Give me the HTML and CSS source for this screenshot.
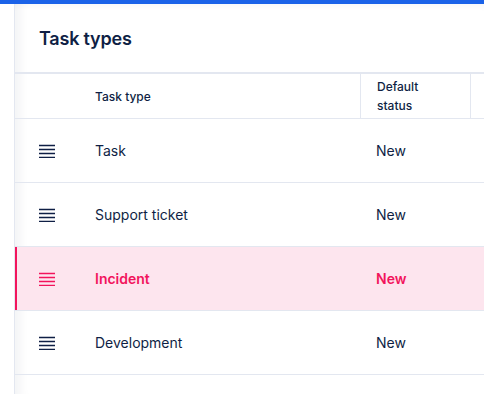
FILE: index.html
```
<!DOCTYPE html>
<html lang="en">
<head>
    <meta charset="UTF-8">
    <meta name="viewport" content="width=device-width, initial-scale=1.0">
    <title>Task types</title>
    <link rel="stylesheet" href="styles.css">
</head>
<body>
    <div class="topbar"></div>
    <div class="layout">
        <div class="gutter"></div>
        <div class="panel">
            <div class="panel-header">
                <h1>Task types</h1>
            </div>
            <div class="table">
                <div class="row head">
                    <div class="cell handle"></div>
                    <div class="cell name">Task type</div>
                    <div class="cell status divided">Default<br>status</div>
                    <div class="cell divided"></div>
                </div>

                <div class="row">
                    <div class="cell handle">
                        <svg class="drag-icon" width="16" height="14" viewBox="0 0 16 14"><path d="M0 1.5h16M0 5.5h16M0 9.5h16M0 13.5h16" stroke="currentColor" stroke-width="1.4"/></svg>
                    </div>
                    <div class="cell name">Task</div>
                    <div class="cell status">New</div>
                    <div class="cell"></div>
                </div>

                <div class="row">
                    <div class="cell handle">
                        <svg class="drag-icon" width="16" height="14" viewBox="0 0 16 14"><path d="M0 1.5h16M0 5.5h16M0 9.5h16M0 13.5h16" stroke="currentColor" stroke-width="1.4"/></svg>
                    </div>
                    <div class="cell name">Support ticket</div>
                    <div class="cell status">New</div>
                    <div class="cell"></div>
                </div>

                <div class="row selected">
                    <div class="cell handle">
                        <svg class="drag-icon" width="16" height="14" viewBox="0 0 16 14"><path d="M0 1.5h16M0 5.5h16M0 9.5h16M0 13.5h16" stroke="currentColor" stroke-width="1.4"/></svg>
                    </div>
                    <div class="cell name">Incident</div>
                    <div class="cell status">New</div>
                    <div class="cell"></div>
                </div>

                <div class="row">
                    <div class="cell handle">
                        <svg class="drag-icon" width="16" height="14" viewBox="0 0 16 14"><path d="M0 1.5h16M0 5.5h16M0 9.5h16M0 13.5h16" stroke="currentColor" stroke-width="1.4"/></svg>
                    </div>
                    <div class="cell name">Development</div>
                    <div class="cell status">New</div>
                    <div class="cell"></div>
                </div>
            </div>
        </div>
    </div>
</body>
</html>
```

FILE: styles.css
```
:root {
    --text-color: #0f1f45;
    --border: #e3e7f0;
    --accent: #1a62e8;
    --pink: #f2145c;
    --pink-bg: #fde5ee;
}

* {
    margin: 0;
    padding: 0;
    box-sizing: border-box;
    font-family: Inter, "Noto Sans", sans-serif;
}

body {
    background: #fff;
    color: var(--text-color);
    height: 394px;
    overflow: hidden;
}

.topbar {
    height: 4px;
    background: var(--accent);
}

.layout {
    display: flex;
    height: 390px;
}

.gutter {
    width: 14px;
    flex-shrink: 0;
    background: #fff;
}

.panel {
    flex: 1;
    border-left: 1px solid var(--border);
    box-shadow: inset 14px 0 12px -10px rgba(20, 30, 60, 0.06),
                inset 0 8px 8px -8px rgba(20, 30, 60, 0.06);
}

.panel-header {
    height: 70px;
    padding-left: 24px;
    display: flex;
    align-items: center;
    border-bottom: 2px solid var(--border);
}

h1 {
    font-size: 18px;
    font-weight: 600;
    letter-spacing: -0.2px;
}

.row {
    display: grid;
    grid-template-columns: 65px 280px 110px 1fr;
    height: 64px;
    border-bottom: 1px solid var(--border);
    align-items: center;
    font-size: 14px;
}

.row.head {
    height: 45px;
    font-size: 12px;
    font-weight: 500;
    line-height: 19px;
    align-items: stretch;
}

.row.head .cell {
    display: flex;
    align-items: center;
}

.cell.divided {
    border-left: 1px solid var(--border);
}

.handle {
    padding-left: 24px;
    display: flex;
    align-items: center;
}

.drag-icon {
    display: block;
    color: var(--text-color);
}

.name {
    padding-left: 15px;
}

.status {
    padding-left: 16px;
}

.row.selected {
    background: var(--pink-bg);
    box-shadow: inset 2px 0 0 var(--pink);
    color: var(--pink);
    font-weight: 600;
}

.row.selected .drag-icon {
    color: var(--pink);
}
```
